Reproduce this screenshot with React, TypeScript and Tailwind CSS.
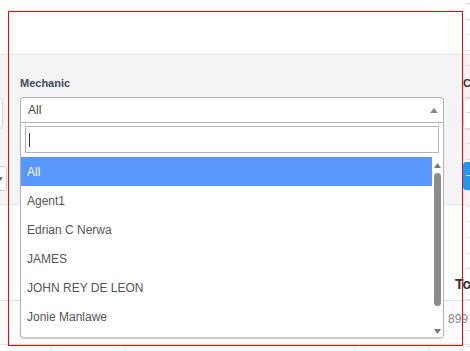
import React from "react";

const options = ["All", "Agent1", "Edrian C Nerwa", "JAMES", "JOHN REY DE LEON", "Jonie Manlawe"];

function Dashes() {
  const items = Array.from({ length: 23 });
  return (
    <div className="absolute right-0 top-[3px] flex w-[4px] flex-col gap-[14.6px]">
      {items.map((_, i) => (
        <div key={i} className="h-px w-[4px] bg-[#dcdcdc]" />
      ))}
    </div>
  );
}

export default function App() {
  return (
    <div className="relative h-[351px] w-[470px] overflow-hidden bg-white font-['Liberation_Sans',Arial,sans-serif] text-[11px] text-[#555]">
      {/* header */}
      <div className="h-[55px] border-b border-[#e4e4e4] bg-white" />

      {/* filter panel */}
      <div className="flex h-[150px] border-b border-[#e6e6e6] bg-[#f4f4f4] pt-[21px]">
        {/* column 1 (cut off) */}
        <div className="-ml-[100px] flex w-[107px] shrink-0 flex-col">
          <div className="h-[15px]" />
          <div className="mt-[6px] h-[32px] w-[103px] rounded-[4px] border border-[#d6d6d6] bg-white" />
          <div className="mt-[37px] flex h-[25px] w-[107px] items-center justify-end rounded-[3px] border border-[#cfcfcf] bg-white pr-[3px]">
            <svg width="5" height="4" viewBox="0 0 5 4">
              <path d="M0 0 L2.5 4 L5 0 Z" fill="#777" />
            </svg>
          </div>
        </div>

        {/* column 2 : Mechanic */}
        <div className="relative ml-[13px] flex w-[424px] shrink-0 flex-col">
          <div className="h-[15px] font-bold leading-[15px] text-[#3c4b5c]">Mechanic</div>
          <div className="mt-[6px] flex h-[25px] items-center justify-between rounded-t-[4px] border border-b-0 border-[#b4b4b4] bg-white pl-[7px] pr-[4px] text-[#444]">
            <span className="text-[12px]">All</span>
            <svg width="8" height="5" viewBox="0 0 8 5" className="mr-[1px]">
              <path d="M0 5 L4 0 L8 5 Z" fill="#888" />
            </svg>
          </div>

          {/* dropdown (overlay) */}
          <div className="absolute left-0 top-[46px] z-10 flex h-[216px] w-[424px] flex-col rounded-b-[4px] border border-t-[#b4b4b4] border-x-[#b4b4b4] border-b-[#c8c8c8] bg-white shadow-[0_1px_1px_rgba(0,0,0,0.18)]">
            <div className="p-[4px] pt-[3px]">
              <div className="flex h-[27px] items-center border border-[#b4b4b4] bg-white pl-[3px]">
                <div className="h-[14px] w-px bg-[#333]" />
              </div>
            </div>
            <div className="relative flex-1 overflow-hidden">
              <div className="mr-[11px] flex flex-col">
                {options.map((o, i) => (
                  <div
                    key={o}
                    className={
                      i === 0
                        ? "flex h-[29px] shrink-0 items-center bg-[#5897fb] pl-[6px] text-[12px] text-white"
                        : "flex h-[29px] shrink-0 items-center pl-[6px] text-[12px] text-[#555]"
                    }
                  >
                    {o}
                  </div>
                ))}
              </div>
              {/* scrollbar */}
              <div className="absolute bottom-0 right-0 top-0 flex w-[11px] flex-col items-center bg-white">
                <svg width="7" height="5" viewBox="0 0 7 5" className="mt-[6px] shrink-0">
                  <path d="M0 5 L3.5 0 L7 5 Z" fill="#7a7a7a" />
                </svg>
                <div className="mt-[5px] h-[133px] w-[7px] shrink-0 rounded-full bg-[#8c8c8c]" />
                <div className="flex-1" />
                <svg width="7" height="5" viewBox="0 0 7 5" className="mb-[3px] shrink-0">
                  <path d="M0 0 L3.5 5 L7 0 Z" fill="#7a7a7a" />
                </svg>
              </div>
            </div>
          </div>
        </div>

        {/* column 3 (cut off) */}
        <div className="ml-[19px] flex w-[120px] shrink-0 flex-col">
          <div className="h-[15px] whitespace-nowrap font-bold leading-[15px] text-[#333]">Customer</div>
          <div className="mt-[7px] h-[32px] w-[120px] rounded-[4px] border border-[#d6d6d6] bg-white" />
          <div className="mt-[32px] h-[28px] w-[120px] rounded-[3px] bg-[#1b9af0]" />
        </div>
      </div>

      {/* table section */}
      <div className="pt-[64px]">
        <div className="grid h-[32px] grid-cols-[52px_74px_229px_74px_1fr] border-b border-[#dedede] text-[14px] font-bold text-[#333]">
          <div />
          <div />
          <div />
          <div />
          <div className="flex items-center whitespace-nowrap pl-[26px]">To</div>
        </div>
        <div className="grid h-[44px] grid-cols-[52px_74px_229px_74px_1fr] border-b border-[#e4e4e4] bg-[#fbfbfb] text-[12px] text-[#888]">
          <div />
          <div />
          <div />
          <div />
          <div className="flex h-[36px] items-center pl-[19px]">899</div>
        </div>
        <div className="grid h-[10px] grid-cols-[52px_74px_229px_74px_1fr]">
          <div className="border-r border-[#e4e4e4]" />
          <div className="border-r border-[#e4e4e4]" />
          <div className="border-r border-[#e4e4e4]" />
          <div className="border-r border-[#e4e4e4]" />
          <div />
        </div>
      </div>

      <Dashes />

      {/* red outline overlay */}
      <div className="pointer-events-none absolute left-[8px] top-[11px] z-20 h-[335px] w-[455px] border border-[#ff0000]" />
    </div>
  );
}
